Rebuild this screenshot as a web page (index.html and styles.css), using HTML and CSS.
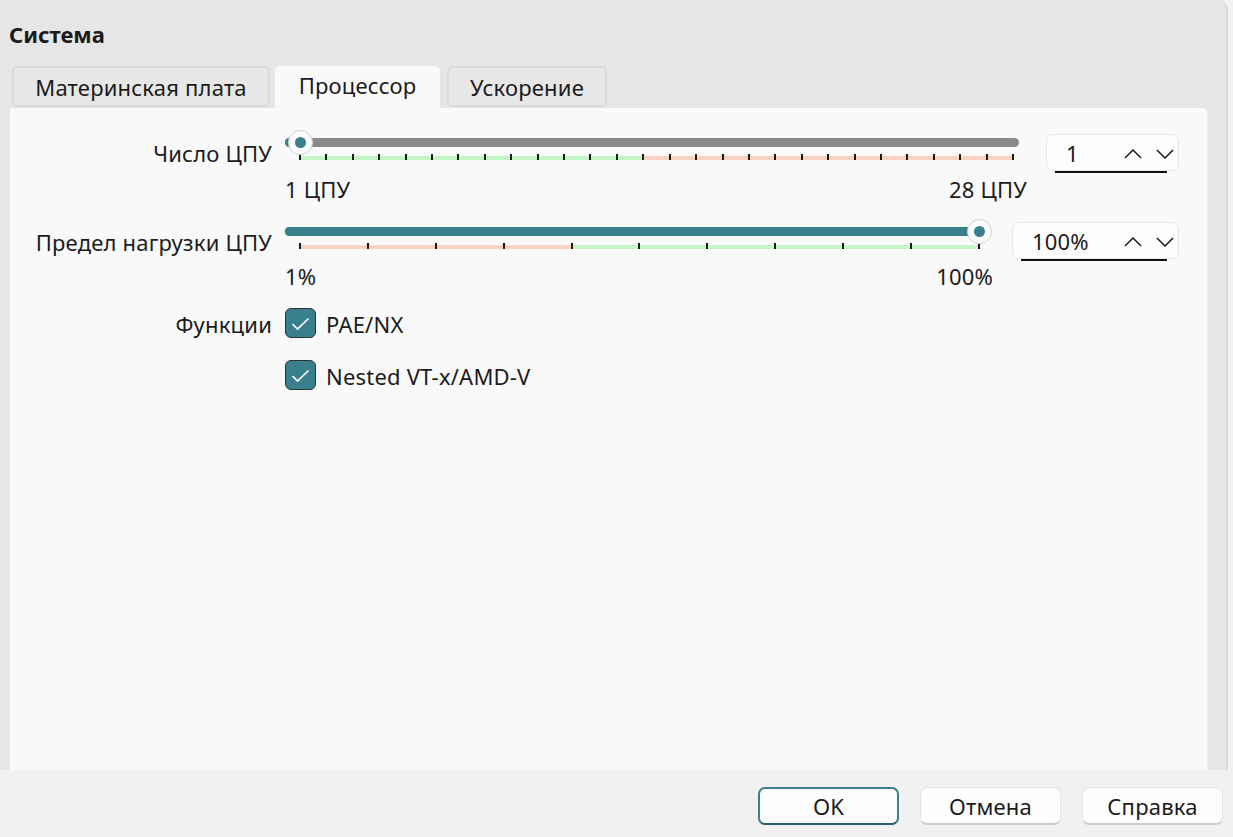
FILE: index.html
```html
<!DOCTYPE html>
<html lang="ru">
<head>
<meta charset="utf-8">
<title>Система</title>
<link rel="stylesheet" href="styles.css">
</head>
<body>
<div class="window">
  <div class="group">
    <div class="group-title">Система</div>
    <div class="tabs">
      <div class="tab tab-board">Материнская плата</div>
      <div class="tab tab-cpu active">Процессор</div>
      <div class="tab tab-accel">Ускорение</div>
    </div>
    <div class="pane">
      <div class="row">
        <div class="label">Число ЦПУ</div>
        <div class="slider-col">
          <div class="slider slider-grey" style="--t:0">
            <div class="track"></div>
            <div class="fill"></div>
            <div class="handle"><span class="dot"></span></div>
          </div>
          <div class="ticks band-cpu">
            <i></i><i></i><i></i><i></i><i></i><i></i><i></i><i></i><i></i><i></i><i></i><i></i><i></i><i></i>
            <i></i><i></i><i></i><i></i><i></i><i></i><i></i><i></i><i></i><i></i><i></i><i></i><i></i><i></i>
          </div>
          <div class="scale"><span>1 ЦПУ</span><span>28 ЦПУ</span></div>
        </div>
        <div class="spin spin-cpu">
          <span class="spin-value">1</span>
          <span class="arrows">
            <svg width="18" height="10" viewBox="0 0 18 10"><path d="M1 9 L9 1 L17 9" fill="none" stroke="#1a1a1a" stroke-width="1.5"/></svg>
            <svg width="18" height="10" viewBox="0 0 18 10"><path d="M1 1 L9 9 L17 1" fill="none" stroke="#1a1a1a" stroke-width="1.5"/></svg>
          </span>
          <span class="underline"></span>
        </div>
      </div>

      <div class="row row-load">
        <div class="label">Предел нагрузки ЦПУ</div>
        <div class="slider-col">
          <div class="slider" style="--t:1">
            <div class="track"></div>
            <div class="fill"></div>
            <div class="handle"><span class="dot"></span></div>
          </div>
          <div class="ticks band-load">
            <i></i><i></i><i></i><i></i><i></i><i></i><i></i><i></i><i></i><i></i><i></i>
          </div>
          <div class="scale"><span>1%</span><span>100%</span></div>
        </div>
        <div class="spin spin-load">
          <span class="spin-value">100%</span>
          <span class="arrows">
            <svg width="18" height="10" viewBox="0 0 18 10"><path d="M1 9 L9 1 L17 9" fill="none" stroke="#1a1a1a" stroke-width="1.5"/></svg>
            <svg width="18" height="10" viewBox="0 0 18 10"><path d="M1 1 L9 9 L17 1" fill="none" stroke="#1a1a1a" stroke-width="1.5"/></svg>
          </span>
          <span class="underline"></span>
        </div>
      </div>

      <div class="row row-features">
        <div class="label label-features">Функции</div>
        <div class="checks">
          <label class="check">
            <span class="box"><svg width="19" height="14" viewBox="0 0 19 14"><path d="M1.5 7 L6.5 12 L17.5 1.5" fill="none" stroke="#fff" stroke-width="1.7"/></svg></span>
            <span class="check-text">PAE/NX</span>
          </label>
          <label class="check">
            <span class="box"><svg width="19" height="14" viewBox="0 0 19 14"><path d="M1.5 7 L6.5 12 L17.5 1.5" fill="none" stroke="#fff" stroke-width="1.7"/></svg></span>
            <span class="check-text">Nested VT-x/AMD-V</span>
          </label>
        </div>
      </div>
    </div>
  </div>
  <div class="footer">
    <button class="btn btn-default">OK</button>
    <button class="btn">Отмена</button>
    <button class="btn">Справка</button>
  </div>
</div>
</body>
</html>
```

FILE: styles.css
```css
* {
  box-sizing: border-box;
}

html, body {
  margin: 0;
  padding: 0;
}

body {
  background: #f1f1f1;
  font-family: "Noto Sans", "Open Sans", sans-serif;
  font-size: 22px;
  letter-spacing: 0.2px;
  color: #1b1b1b;
  width: 1233px;
  height: 837px;
  overflow: hidden;
}

.window {
  display: flex;
  flex-direction: column;
  height: 837px;
}

.group {
  width: 1228px;
  height: 770px;
  background: #e6e6e6;
  border-right: 2px solid #d9d9d9;
  border-top-right-radius: 10px;
  display: flex;
  flex-direction: column;
}

.group-title {
  font-weight: 700;
  font-size: 22px;
  line-height: 26px;
  padding-left: 9px;
  margin-top: 21px;
  letter-spacing: 0;
}

.tabs {
  display: flex;
  align-items: flex-end;
  margin-top: 19px;
  padding-left: 12px;
  height: 42px;
  position: relative;
  z-index: 1;
}

.tab {
  height: 41px;
  line-height: 38px;
  text-align: center;
  border: 2px solid #dadada;
  border-radius: 5px;
  background: #e7e7e7;
  margin-bottom: 1px;
}

.tab-board {
  width: 258px;
}

.tab-cpu {
  width: 165px;
  margin-left: 5px;
}

.tab-accel {
  width: 160px;
  margin-left: 7px;
}

.tab.active {
  background: #f9f9f9;
  border: none;
  border-radius: 5px 5px 0 0;
  height: 43px;
  line-height: 38px;
  margin-bottom: -1px;
}

.pane {
  margin-left: 10px;
  width: 1198px;
  flex: 1;
  background: #f9f9f9;
  border-top-right-radius: 6px;
  border-right: 1px solid #efefef;
  padding: 22px 28px 0 0;
}

.row {
  display: flex;
  align-items: flex-start;
}

.row-load {
  margin-top: 17px;
}

.label {
  width: 262px;
  flex: none;
  text-align: right;
  line-height: 26px;
  padding-top: 10px;
}

.slider-col {
  flex: 1;
  margin-left: 13px;
}

.slider {
  position: relative;
  height: 26px;
  padding-top: 8px;
}

.track {
  width: calc(100% - 8px);
  height: 9px;
  border-radius: 5px;
  background: #3a7f8c;
}

.slider-grey .track {
  background: #898989;
}

.fill {
  position: absolute;
  left: 0;
  top: 8px;
  height: 9px;
  border-radius: 5px 0 0 5px;
  background: #3a7f8c;
  width: calc(15px + var(--t) * (100% - 29px));
}

.handle {
  position: absolute;
  top: 0;
  left: calc(15px + var(--t) * (100% - 29px) - 12.5px);
  width: 25px;
  height: 25px;
  border-radius: 50%;
  background: #fbfbfb;
  border: 1.5px solid #d6d6d6;
  box-shadow: 0 0 1px rgba(0, 0, 0, 0.08);
  display: flex;
  align-items: center;
  justify-content: center;
}

.dot {
  width: 11px;
  height: 11px;
  border-radius: 50%;
  background: #3a7f8c;
}

.ticks {
  height: 4px;
  margin: 0 13px 0 14px;
  display: flex;
  justify-content: space-between;
}

.ticks i {
  display: block;
  width: 2px;
  height: 6px;
  margin-top: -2px;
  background: #1a1a1a;
}

.band-cpu {
  background: linear-gradient(to right, #c3f6c3 0, #c3f6c3 48.2%, #fbd2c2 48.2%, #fbd2c2 100%);
}

.band-load {
  background: linear-gradient(to right, #fbd2c2 0, #fbd2c2 40.3%, #c3f6c3 40.3%, #c3f6c3 100%);
}

.scale {
  display: flex;
  justify-content: space-between;
  margin-top: 16px;
  line-height: 26px;
}

.row-load .scale {
  margin-top: 14px;
}

.spin {
  position: relative;
  flex: none;
  margin-left: 19px;
  margin-top: 4px;
  height: 37px;
  background: #fdfdfd;
  border: 1px solid #e6e6e6;
  border-radius: 7px;
  display: flex;
  align-items: center;
  padding-left: 19px;
  padding-right: 4px;
}

.row-load .spin {
  margin-top: 3px;
}

.spin-cpu {
  width: 133px;
}

.spin-load {
  width: 167px;
}

.spin-value {
  flex: 1;
  line-height: 26px;
}

.arrows {
  display: flex;
  gap: 14px;
  padding-top: 3px;
}

.arrows svg {
  display: block;
}

.underline {
  position: absolute;
  left: 8px;
  right: 11px;
  bottom: -3px;
  height: 2px;
  background: #111;
}

.row-features {
  margin-top: 19px;
}

.label-features {
  padding-top: 3px;
}

.checks {
  margin-left: 13px;
  display: flex;
  flex-direction: column;
  gap: 22px;
}

.check {
  display: flex;
  align-items: center;
  gap: 10px;
  line-height: 26px;
}

.box {
  width: 31px;
  height: 30px;
  border-radius: 6px;
  background: #3a7f8c;
  border: 1.5px solid #2b3336;
  display: flex;
  align-items: center;
  justify-content: center;
}

.box svg {
  display: block;
  margin-top: 1px;
}

.check-text {
  padding-top: 2px;
}

.footer {
  height: 67px;
  display: flex;
  justify-content: flex-end;
  align-items: flex-start;
  padding: 17px 10px 0 0;
  gap: 21px;
}

.btn {
  width: 141px;
  height: 38px;
  font-family: inherit;
  font-size: 22px;
  letter-spacing: 0.2px;
  color: #1b1b1b;
  background: #fdfdfd;
  border: 1px solid #e3e3e3;
  border-bottom: 2px solid #cccccc;
  border-radius: 7px;
  padding: 0;
  line-height: 34px;
}

.btn-default {
  border: 2px solid #3a7f8c;
  border-bottom-color: #2b5f69;
}
```
